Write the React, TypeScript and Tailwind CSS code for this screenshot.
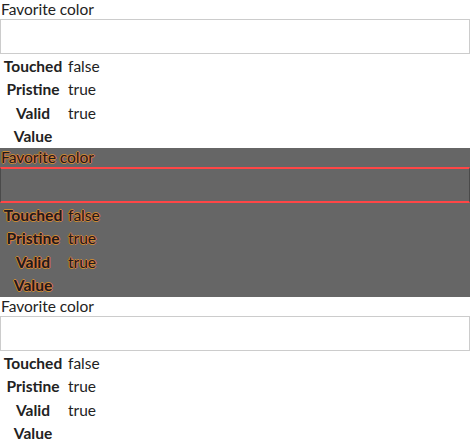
const rows: [string, string][] = [
  ["Touched", "false"],
  ["Pristine", "true"],
  ["Valid", "true"],
  ["Value", ""],
]

function Field({ ghost }: { ghost?: boolean }) {
  const txt = ghost
    ? "text-[#1c1c1c] [text-shadow:1px_0_0_#e8613a,-1px_0_0_#c98a34,0_1px_0_#c98a34,0_-1px_0_#c98a34]"
    : "text-[#222]"
  return (
    <div className={ghost ? "h-[149px] bg-[#666666]" : "h-[148px] bg-white"}>
      <div className={`h-[19px] pl-[1px] text-[15.5px] leading-[19px] ${txt}`}>Favorite color</div>
      <div
        className={
          ghost
            ? "h-[36px] w-full border-y-2 border-x border-y-[#ff4646] border-x-[#4a4a4a]"
            : "h-[35px] w-full border border-[#cccccc]"
        }
      />
      <table className={`mt-[1px] border-collapse text-[15.5px] ${txt}`}>
        <tbody>
          {rows.map(([k, v]) => (
            <tr key={k} className="h-[23px]">
              <th className="w-[66px] text-center font-bold">{k}</th>
              <td className="pl-[2px] text-left">{v}</td>
            </tr>
          ))}
        </tbody>
      </table>
    </div>
  )
}

export default function App() {
  return (
    <div className="w-[470px] font-['Lato',sans-serif]">
      <Field />
      <Field ghost />
      <Field />
    </div>
  )
}
